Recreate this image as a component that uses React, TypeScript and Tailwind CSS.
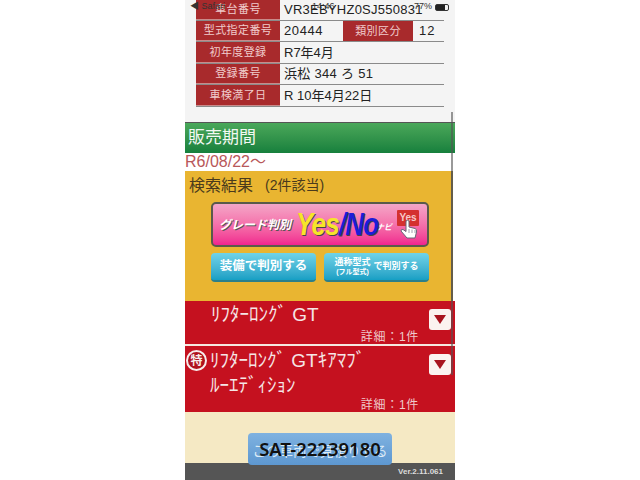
const sans = "font-['Liberation_Sans','Noto_Sans_CJK_JP',sans-serif]"

const Row = ({ label, children, h }: { label: string; children: React.ReactNode; h: string }) => (
  <div className={`flex ${h} border-b border-[#8a8a8a]`}>
    <div className="w-[84px] shrink-0 flex items-center justify-center bg-[#a82a2c] text-[#f0cccc] text-[11px] tracking-[0.4px] border-b border-[#c98a8a]">
      {label}
    </div>
    <div className="flex-1 flex items-center pl-[4px] text-[#222] text-[13px]">{children}</div>
  </div>
)

const DownBox = () => (
  <div className="w-[22px] h-[21px] bg-[#fbf3f0] rounded-[3px] flex items-center justify-center">
    <svg width="14" height="11" viewBox="0 0 14 11">
      <path d="M1 1 H13 L7 10 Z" fill="#a8141f" />
    </svg>
  </div>
)

const Detail = () => (
  <div className="absolute right-[36px] bottom-0 text-[12px] leading-[14px] tracking-[0.7px] text-[#eec9cb]">詳細：1件</div>
)

export default function App() {
  return (
    <div className={`${sans} w-[640px] h-[480px] bg-white flex justify-center overflow-hidden`}>
      <div className="w-[270px] h-[480px] flex flex-col relative">
        {/* status bar over the page */}
        <div className="absolute z-10 top-[1px] left-[5px] right-[6px] h-[12px] flex items-center text-[9px] text-[#333]">
          <span className="w-[122px] whitespace-nowrap">◀ Safari</span>
          <span className="whitespace-nowrap">14:46</span>
          <span className="ml-auto mr-[3px]">77%</span>
          <span className="w-[14px] h-[7px] border border-[#333] rounded-[2px]">
            <span className="block w-[9px] h-full bg-[#222]" />
          </span>
        </div>

        <div className="h-[123px] bg-[#f4f4f4] pl-[11px] pr-[11px] border-b border-[#555]">
          <Row label="車台番号" h="h-[21px]">
            <span className="text-[13px] tracking-[0.25px]">VR3EBYHZ0SJ550831</span>
          </Row>
          <Row label="型式指定番号" h="h-[21px]">
            <span className="w-[59px] tracking-[0.6px]">20444</span>
            <span className="w-[70px] h-full flex items-center justify-center bg-[#a82a2c] text-[#f0cccc] text-[11px] tracking-[0.4px]">類別区分</span>
            <span className="pl-[6px] tracking-[1px]">12</span>
          </Row>
          <Row label="初年度登録" h="h-[22px]">R7年4月</Row>
          <Row label="登録番号" h="h-[21px]">
            <span className="tracking-[0.3px]">浜松 344 ろ 51</span>
          </Row>
          <Row label="車検満了日" h="h-[22px]">R 10年4月22日</Row>
        </div>

        <div className="h-[30px] bg-gradient-to-b from-[#4aa85a] to-[#15803d] text-[#f2f8f2] text-[17px] pl-[3px] flex items-center">
          販売期間
        </div>
        <div className="h-[18px] bg-white text-[#b8585a] text-[16px] leading-[18px]">
          R6/08/22～
        </div>

        <div className="h-[130px] mr-[2px] bg-[#e9b531] border-r-2 border-[#7b6a3a] flex flex-col">
          <div className="h-[29px] pl-[4px] flex items-center text-[#4a3a1c] text-[16px]">
            検索結果
            <span className="ml-[12px] text-[14px]">(2件該当)</span>
          </div>
          <div className="ml-[26px] mt-[2px] w-[218px] h-[45px] rounded-[5px] border-[2px] border-[#5a5a4a] bg-gradient-to-b from-[#f3a6c8] to-[#f0218f] flex items-center pl-[6px]">
            <span className="w-[74px] shrink-0 text-white text-[12px] font-bold italic whitespace-nowrap [text-shadow:1px_1px_0_#555]">グレード判別</span>
            <span className="ml-[3px] w-[80px] flex shrink-0 text-[31px] font-bold italic leading-none [text-shadow:1px_1px_0_#444] scale-x-[0.84] origin-left whitespace-nowrap tracking-[-1px]">
              <span className="text-[#f6e52a]">Yes</span>
              <span className="text-[#1c1cd8]">/No</span>
            </span>
            <span className="mt-[6px] w-[16px] shrink-0 text-white text-[8px] italic font-bold whitespace-nowrap">ナビ</span>
            <div className="ml-[5px] relative w-[23px] h-[30px] shrink-0">
              <div className="w-[22px] h-[16px] bg-[#d4302f] rounded-[1px] text-[#f6c9c9] text-[10px] font-bold leading-[15px] text-center">Yes</div>
              <svg className="absolute left-[2px] top-[9px]" width="19" height="20" viewBox="0 0 19 20">
                <path d="M7 2 Q8.5 0.5 10 2 V8 L16 9.5 Q18 10 17.5 13 L16 19 H8 L2 12 Q2 10 4 10.5 L7 12.5 Z" fill="#fff" stroke="#667" strokeWidth="1" />
                <path d="M10 10 V14 M13 10.5 V14 M16 11 V14" stroke="#889" strokeWidth="0.8" />
              </svg>
            </div>
          </div>
          <div className="ml-[26px] mt-[6px] flex gap-[8px]">
            <div className="w-[105px] h-[29px] rounded-[4px] bg-gradient-to-b from-[#6fd3e8] to-[#159fc4] border-b-2 border-[#2c7f8a] text-white text-[12.5px] font-bold flex items-center justify-center whitespace-nowrap">
              装備で判別する
            </div>
            <div className="w-[105px] h-[29px] rounded-[4px] bg-gradient-to-b from-[#6fd3e8] to-[#159fc4] border-b-2 border-[#2c7f8a] text-white flex items-center justify-center whitespace-nowrap">
              <span className="flex flex-col items-center text-[9px] leading-[10px] font-bold">
                <span>通称型式</span>
                <span className="text-[7px]">(フル型式)</span>
              </span>
              <span className="ml-[3px] text-[9px] font-bold">で判別する</span>
            </div>
          </div>
        </div>

        <div className="h-[43px] bg-[#c5111f] relative text-[#f5e6e6]">
          <div className="pl-[26px] text-[19px] leading-[28px] whitespace-nowrap">ﾘﾌﾀｰﾛﾝｸﾞ GT</div>
          <Detail />
          <div className="absolute right-[4px] top-[8px]"><DownBox /></div>
        </div>
        <div className="h-[2px] bg-[#f5e8e0]" />
        <div className="h-[66px] bg-[#c5111f] relative text-[#f5e6e6]">
          <div className="absolute left-[1px] top-[4px] w-[21px] h-[21px] rounded-full border-2 border-[#f7ecec] bg-[#b0111d] text-[#f7ecec] text-[12px] font-bold flex items-center justify-center">特</div>
          <div className="pl-[25px] pt-[2px] text-[19px] leading-[25px] whitespace-nowrap">
            <div>ﾘﾌﾀｰﾛﾝｸﾞ GTｷｱﾏﾌﾞ</div>
            <div>ﾙｰｴﾃﾞｨｼｮﾝ</div>
          </div>
          <Detail />
          <div className="absolute right-[4px] top-[8px]"><DownBox /></div>
        </div>

        <div className="h-[51px] bg-[#f5e9c4]" />
        <div className="h-[17px] bg-[#555555] text-[#ddd] text-[8px] font-bold text-right pr-[12px] leading-[17px]">
          Ver.2.11.061
        </div>

        {/* scrollbar */}
        <div className="absolute left-[266px] top-[112px] w-[2px] h-[263px] bg-[#555]/60" />

        <div className="absolute left-[63px] top-[433px] w-[144px] h-[32px] rounded-[4px] bg-gradient-to-b from-[#7fb2e0] to-[#5d97d0] flex items-center justify-center">
          <span className="absolute top-[9px] text-[#dcebf7] text-[13.5px] whitespace-nowrap">この車両で見積りする</span>
          <span className="relative text-[#111] text-[18.5px] font-['Noto_Sans',sans-serif] font-semibold">SAT-22239180</span>
        </div>
      </div>
    </div>
  )
}
